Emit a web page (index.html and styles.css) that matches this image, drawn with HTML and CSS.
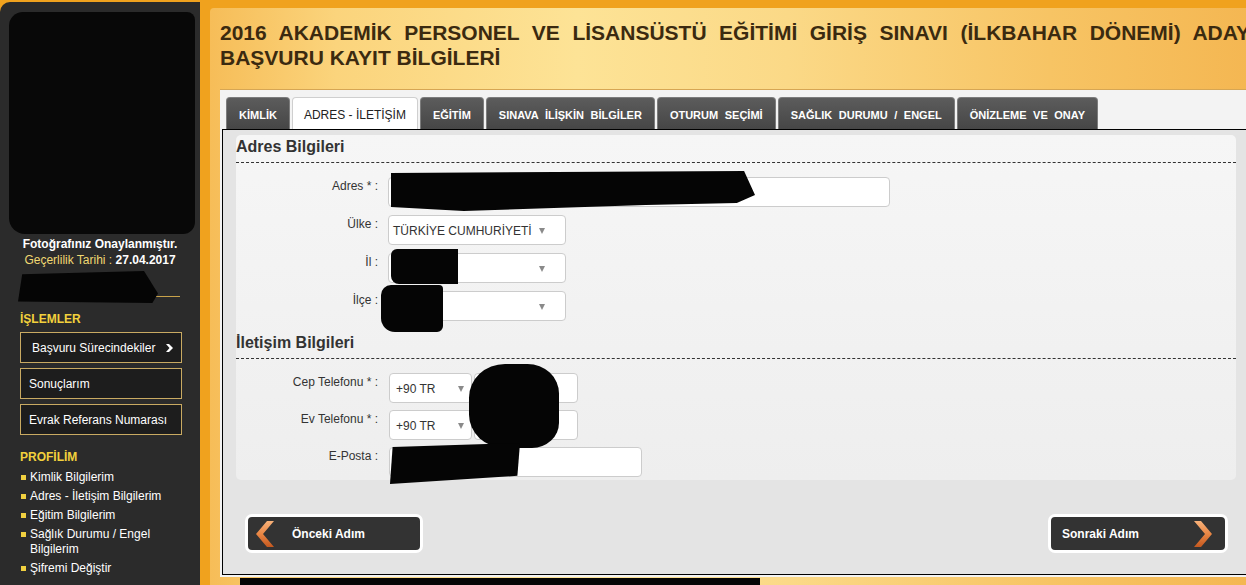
FILE: index.html
```html
<!DOCTYPE html>
<html lang="tr">
<head>
  <meta charset="UTF-8">
  <title>Başvuru Kayıt Bilgileri</title>
  <link rel="stylesheet" href="styles.css">
</head>
<body>

<div class="page">

  <aside class="sidebar">
    <div class="photo"></div>
    <p class="photo-status">Fotoğrafınız Onaylanmıştır.</p>
    <p class="photo-date"><span>Geçerlilik Tarihi :</span> <b>27.04.2017</b></p>
    <div class="user-line"></div>

    <h4 class="side-title">İŞLEMLER</h4>
    <a class="side-btn first">Başvuru Sürecindekiler
      <svg class="side-arrow" width="7" height="8" viewBox="0 0 7 8"><polygon points="0,0 3,0 7,4 3,8 0,8 3.5,4" fill="#fff"/></svg>
    </a>
    <a class="side-btn">Sonuçlarım</a>
    <a class="side-btn">Evrak Referans Numarası</a>

    <h4 class="side-title">PROFİLİM</h4>
    <ul class="side-list">
      <li>Kimlik Bilgilerim</li>
      <li>Adres - İletişim Bilgilerim</li>
      <li>Eğitim Bilgilerim</li>
      <li>Sağlık Durumu / Engel Bilgilerim</li>
      <li>Şifremi Değiştir</li>
    </ul>
  </aside>

  <main class="main">
    <div class="main-inner">
      <h1 class="title">2016 AKADEMİK PERSONEL VE LİSANSÜSTÜ EĞİTİMİ GİRİŞ SINAVI (İLKBAHAR DÖNEMİ) ADAY BAŞVURU KAYIT BİLGİLERİ</h1>

      <div class="panel">
        <ul class="tabs">
          <li class="tab">KİMLİK</li>
          <li class="tab active">ADRES - İLETİŞİM</li>
          <li class="tab">EĞİTİM</li>
          <li class="tab">SINAVA İLİŞKİN BİLGİLER</li>
          <li class="tab">OTURUM SEÇİMİ</li>
          <li class="tab">SAĞLIK DURUMU / ENGEL</li>
          <li class="tab">ÖNİZLEME VE ONAY</li>
        </ul>

        <div class="tab-body">
          <div class="form-box">
            <h2 class="section-title">Adres Bilgileri</h2>
            <div class="fields">
              <div class="field">
                <label>Adres * :</label>
                <div class="input input-wide"></div>
              </div>
              <div class="field">
                <label>Ülke :</label>
                <div class="input select">TÜRKİYE CUMHURİYETİ<i class="arrow"></i></div>
              </div>
              <div class="field">
                <label>İl :</label>
                <div class="input select"><i class="arrow"></i></div>
              </div>
              <div class="field">
                <label>İlçe :</label>
                <div class="input select"><i class="arrow"></i></div>
              </div>
            </div>

            <h2 class="section-title second">İletişim Bilgileri</h2>
            <div class="fields tight">
              <div class="field">
                <label>Cep Telefonu * :</label>
                <div class="input select phone-code">+90 TR<i class="arrow"></i></div>
                <div class="input phone-number"></div>
              </div>
              <div class="field">
                <label>Ev Telefonu * :</label>
                <div class="input select phone-code">+90 TR<i class="arrow"></i></div>
                <div class="input phone-number"></div>
              </div>
              <div class="field">
                <label>E-Posta :</label>
                <div class="input input-mail"></div>
              </div>
            </div>
          </div>

          <div class="nav">
            <a class="nav-btn prev">
              <svg width="20" height="26" viewBox="0 0 20 26">
                <defs>
                  <linearGradient id="chevL" x1="0" y1="0" x2="0" y2="1">
                    <stop offset="0" stop-color="#f8b27a"/>
                    <stop offset="0.5" stop-color="#e98644"/>
                    <stop offset="1" stop-color="#c4581f"/>
                  </linearGradient>
                </defs>
                <polygon points="12,0 19,0 8,13 19,26 12,26 1,13" fill="url(#chevL)"/>
              </svg>
              <span>Önceki Adım</span>
            </a>
            <a class="nav-btn next">
              <span>Sonraki Adım</span>
              <svg width="20" height="26" viewBox="0 0 20 26">
                <defs>
                  <linearGradient id="chevR" x1="0" y1="0" x2="0" y2="1">
                    <stop offset="0" stop-color="#f8b27a"/>
                    <stop offset="0.5" stop-color="#e98644"/>
                    <stop offset="1" stop-color="#c4581f"/>
                  </linearGradient>
                </defs>
                <polygon points="8,0 1,0 12,13 1,26 8,26 19,13" fill="url(#chevR)"/>
              </svg>
            </a>
          </div>
        </div>
      </div>
    </div>
  </main>

</div>

<!-- karalanmış alanlar -->
<div class="redact r-photo"></div>
<div class="redact r-name"></div>
<div class="redact r-adres"></div>
<div class="redact r-il"></div>
<div class="redact r-ilce"></div>
<div class="redact r-phone"></div>
<div class="redact r-mail"></div>
<div class="redact r-bottom"></div>

</body>
</html>
```

FILE: styles.css
```css
body {
  margin: 0;
  width: 1246px;
  height: 585px;
  overflow: hidden;
  position: relative;
  background: #f0a21e;
  font-family: "Liberation Sans", Arial, sans-serif;
  font-size: 12px;
  color: #333;
}

.page {
  display: flex;
  align-items: flex-start;
  height: 585px;
}

/* sol menü */
.sidebar {
  flex: none;
  width: 200px;
  height: 583px;
  margin-top: 2px;
  background: #2b2b2b;
  border-top-left-radius: 10px;
  color: #fff;
}

.photo {
  margin: 18px 20px 0;
  height: 210px;
  border: 1px solid #555;
  border-radius: 6px;
  background: #0c0c0c;
  box-sizing: border-box;
}

.photo-status {
  margin: 6px 0 0;
  text-align: center;
  font-weight: bold;
  line-height: 16px;
}

.photo-date {
  margin: 0;
  text-align: center;
  line-height: 16px;
}

.photo-date span {
  color: #f0d872;
}

.user-line {
  margin: 0 20px;
  height: 28px;
  border-bottom: 1px solid #c8a24a;
}

.side-title {
  margin: 14px 0 0 20px;
  font-size: 12px;
  line-height: 16px;
  font-weight: bold;
  color: #f2d13c;
}

.side-btn {
  display: flex;
  align-items: center;
  margin: 5px 0 0 20px;
  width: 162px;
  height: 31px;
  box-sizing: border-box;
  padding: 0 8px 0 8px;
  border: 1px solid #c9aa62;
  background: #1d1d1d;
  color: #fff;
  text-decoration: none;
}

.side-btn.first {
  margin-top: 5px;
  padding-left: 11px;
}

.side-arrow {
  margin-left: auto;
}

.side-list {
  list-style: none;
  margin: 5px 0 0 20px;
  padding: 0;
  width: 160px;
}

.side-list li {
  position: relative;
  padding-left: 10px;
  line-height: 15px;
  margin-bottom: 4px;
}

.side-list li::before {
  content: "";
  position: absolute;
  left: 1px;
  top: 5px;
  width: 5px;
  height: 5px;
  background: #f0d040;
}

/* ana alan */
.main {
  flex: none;
  width: 1060px;
  height: 585px;
  padding: 8px 0 0 10px;
  box-sizing: border-box;
}

.main-inner {
  height: 100%;
  padding: 12px 0 0 10px;
  box-sizing: border-box;
  border-top-left-radius: 4px;
  background: linear-gradient(90deg, #f6bd58 0%, #fbd47c 12%, #fde396 35%, #fbd987 55%, #f7c464 80%, #f4b651 100%);
}

.title {
  margin: 0;
  width: 1030px;
  font-size: 21px;
  line-height: 25px;
  text-align: justify;
  color: #3b2a10;
}

.panel {
  margin-top: 20px;
  padding: 0 0 2px 2px;
  background: #f3f3f3;
  box-shadow: 0 -1px 0 #d6a654;
}

.tabs {
  display: flex;
  align-items: flex-end;
  gap: 2px;
  list-style: none;
  margin: 0;
  padding: 7px 0 0 4px;
}

.tab {
  height: 32px;
  box-sizing: border-box;
  padding: 2px 12px 0;
  display: flex;
  align-items: center;
  border: 1px solid #7c7c7c;
  border-bottom: none;
  border-radius: 4px 4px 0 0;
  background: linear-gradient(#5c5c5c, #464646);
  color: #fff;
  font-size: 11px;
  font-weight: bold;
  word-spacing: 3.5px;
}

.tab.active {
  padding: 2px 11px 0;
  background: #fff;
  border-color: #cfcfcf;
  color: #222;
  font-size: 12px;
  font-weight: normal;
  word-spacing: 0;
}

.tab-body {
  border: 1px solid #000;
  background: #e4e4e4;
  padding: 5px 16px 21px 13px;
}

.form-box {
  width: 1000px;
  padding: 2px 0 3px;
  border-radius: 5px;
  background: linear-gradient(#f6f6f6, #eeeeee);
}

.section-title {
  margin: 0;
  padding-bottom: 5px;
  font-size: 16px;
  line-height: 20px;
  color: #333;
  border-bottom: 1px dashed #333;
}

.section-title.second {
  margin-top: 12px;
}

.fields {
  display: flex;
  flex-direction: column;
  gap: 8px;
  margin-top: 14px;
}

.fields.tight {
  gap: 7px;
}

.field {
  display: flex;
  align-items: flex-start;
  gap: 10px;
}

.field label {
  flex: none;
  width: 142px;
  padding-top: 1px;
  line-height: 16px;
  text-align: right;
  color: #333;
}

.input {
  height: 30px;
  box-sizing: border-box;
  border: 1px solid #ccc;
  border-radius: 4px;
  background: #fff;
}

.input-wide {
  width: 502px;
}

.input-mail {
  width: 253px;
  margin-left: 1px;
}

.select {
  width: 178px;
  display: flex;
  align-items: center;
  padding: 2px 20px 0 4px;
  color: #333;
}

.select .arrow {
  margin-left: auto;
  width: 0;
  height: 0;
  border-left: 3.5px solid transparent;
  border-right: 3.5px solid transparent;
  border-top: 6px solid #8a8a8a;
}

.phone-code {
  width: 83px;
  margin-left: 1px;
  padding: 2px 7px 0 6px;
}

.phone-number {
  width: 104px;
  margin-left: -8px;
}

.nav {
  display: flex;
  justify-content: space-between;
  width: 1000px;
  box-sizing: border-box;
  margin-top: 34px;
  padding: 0 8px 0 9px;
}

.nav-btn {
  display: flex;
  align-items: center;
  width: 180px;
  height: 39px;
  box-sizing: border-box;
  border: 3px solid #fff;
  border-radius: 7px;
  background: #333;
  color: #fff;
  font-weight: bold;
  text-decoration: none;
}

.nav-btn.prev {
  width: 178px;
  padding-left: 7px;
  gap: 17px;
}

.nav-btn.next {
  padding: 0 12px 0 11px;
}

.nav-btn.next svg {
  margin-left: auto;
}

/* karalama */
.redact {
  position: absolute;
  background: #050505;
}

.r-photo {
  left: 9px;
  top: 12px;
  width: 186px;
  height: 222px;
  border-radius: 14px 8px 12px 16px;
  background: #080808;
}

.r-name {
  left: 18px;
  top: 271px;
  width: 140px;
  height: 32px;
  clip-path: polygon(3% 10%, 90% 0, 100% 70%, 96% 100%, 0 95%);
}

.r-adres {
  left: 391px;
  top: 171px;
  width: 364px;
  height: 40px;
  clip-path: polygon(0 5%, 97% 0, 100% 60%, 95% 80%, 70% 85%, 20% 100%, 0 90%);
}

.r-il {
  left: 391px;
  top: 249px;
  width: 67px;
  height: 35px;
  border-radius: 6px 0 0 8px;
}

.r-ilce {
  left: 381px;
  top: 285px;
  width: 62px;
  height: 47px;
  border-radius: 10px 4px 6px 14px;
}

.r-phone {
  left: 469px;
  top: 364px;
  width: 90px;
  height: 84px;
  border-radius: 40% 35% 30% 40%;
}

.r-mail {
  left: 390px;
  top: 443px;
  width: 130px;
  height: 41px;
  clip-path: polygon(2% 10%, 100% 0, 98% 80%, 0 100%);
}

.r-bottom {
  left: 240px;
  top: 578px;
  width: 520px;
  height: 7px;
}
```
